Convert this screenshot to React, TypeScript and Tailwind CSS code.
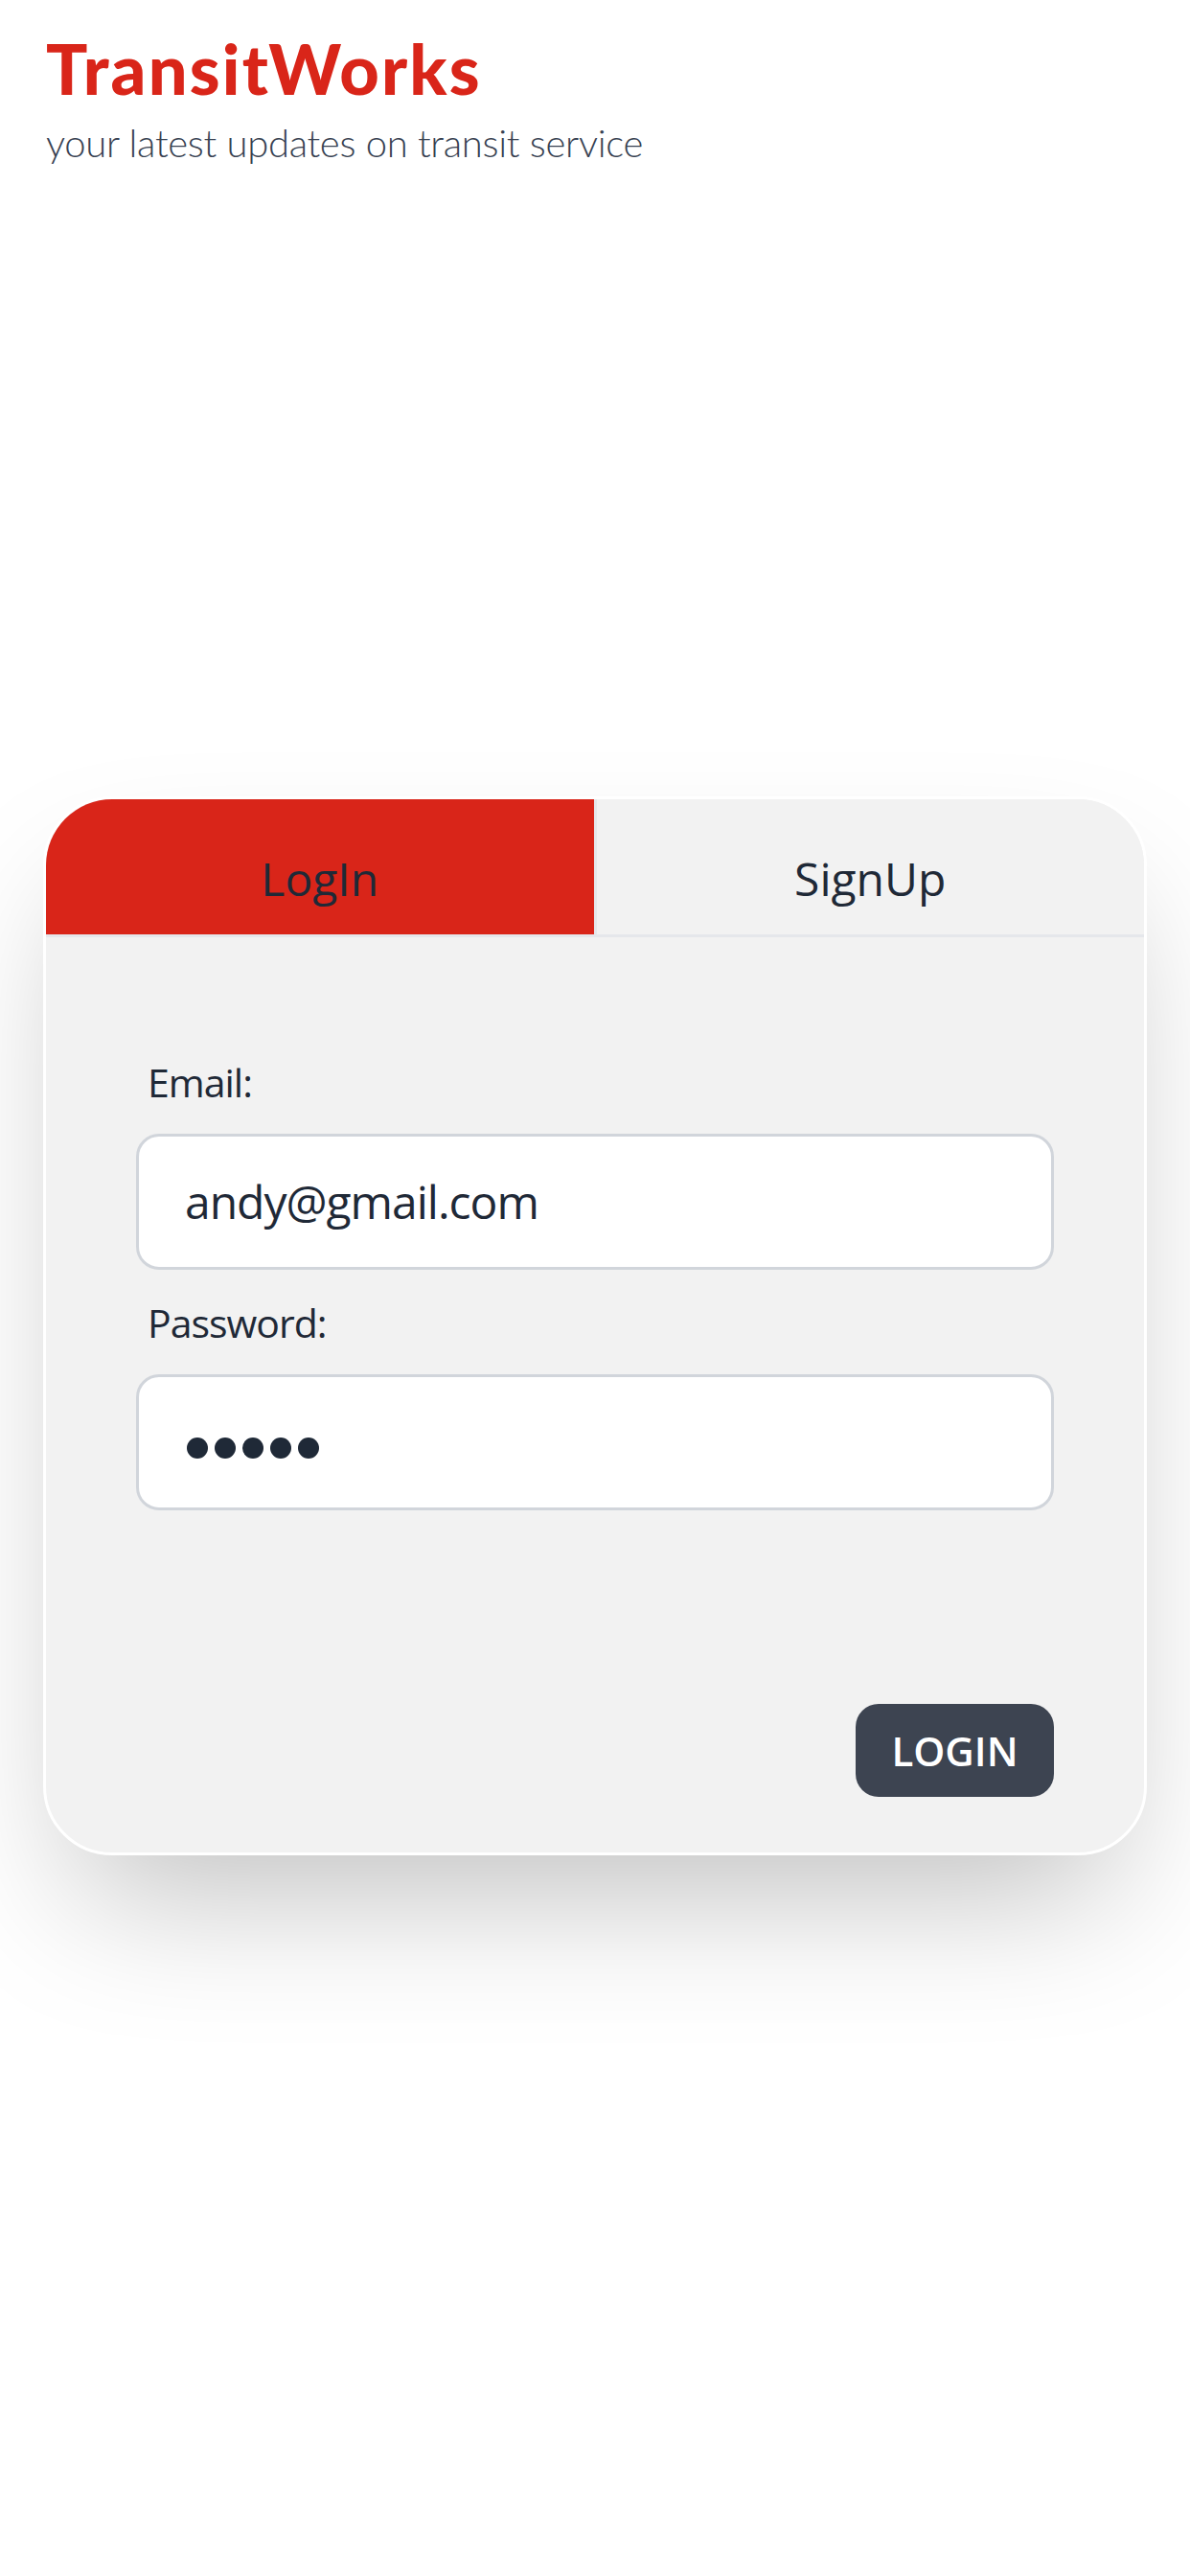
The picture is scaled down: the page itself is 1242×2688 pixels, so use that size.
import React from 'react';

const bodyFont = { fontFamily: '"Open Sans", "Noto Sans", sans-serif' };
const headFont = { fontFamily: 'Lato, "Noto Sans", sans-serif' };

function Field({ label, children }: { label: string; children: React.ReactNode }) {
    return (
        <div className="flex flex-col">
            <label className="pl-[12px] text-[41px] leading-[63px] tracking-[-1px] text-[#1f2937]">{label}</label>
            <div className="mt-[22px] flex h-[142px] items-center rounded-[24px] border-[3px] border-[#d1d5db] bg-white pl-[48px]">
                {children}
            </div>
        </div>
    );
}

export default function App() {
    return (
        <div className="min-h-screen bg-white" style={bodyFont}>
            <header className="px-[48px] pt-[35px]" style={headFont}>
                <h1 className="text-[72px] font-black leading-none tracking-[2.2px] text-[#d92519]">
                    TransitWorks
                </h1>
                <p className="mt-[18px] text-[40px] font-light leading-[48px] tracking-[-0.3px] text-[#374151]">
                    your latest updates on transit service
                </p>
            </header>

            <main className="mt-[658px] px-[45px] pb-[600px]">
                <div className="overflow-hidden rounded-[72px] border-[3px] border-white bg-[#f2f2f2] shadow-[0_75px_150px_-36px_rgba(0,0,0,0.25)]">
                    <div className="flex h-[144px] border-b-[3px] border-[#e5e7eb]">
                        <button className="flex flex-1 items-center justify-center bg-[#d92519] pt-[24px] text-[48px] text-[#1f2937]">
                            LogIn
                        </button>
                        <button className="flex flex-1 items-center justify-center border-l-[3px] border-[#e5e7eb] bg-[#f2f2f2] pt-[24px] text-[48px] text-[#1f2937]">
                            SignUp
                        </button>
                    </div>

                    <form className="flex flex-col px-[94px] pt-[120px] pb-[58px]">
                        <Field label="Email:">
                            <span className="text-[48px] leading-[72px] tracking-[-1px] text-[#1f2937]">andy@gmail.com</span>
                        </Field>
                        <div className="mt-[24px]">
                            <Field label="Password:">
                                <div className="ml-[2px] mt-[12px] flex gap-[7px]">
                                    {[0, 1, 2, 3, 4].map((i) => (
                                        <span key={i} className="h-[22px] w-[22px] rounded-full bg-[#1f2937]" />
                                    ))}
                                </div>
                            </Field>
                        </div>
                        <div className="mt-[202px] flex justify-end">
                            <button
                                type="button"
                                className="flex h-[97px] w-[207px] items-center justify-center rounded-[24px] bg-[#3d4451] text-[42px] font-semibold text-white"
                            >
                                LOGIN
                            </button>
                        </div>
                    </form>
                </div>
            </main>
        </div>
    );
}
